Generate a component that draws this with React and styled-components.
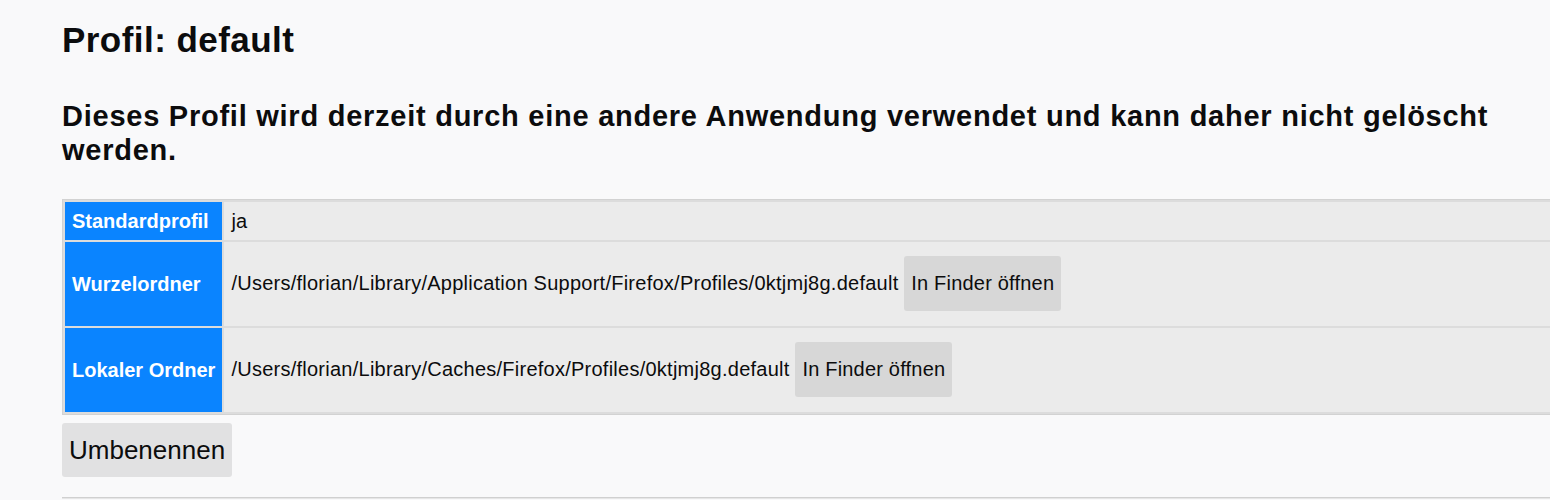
import React from 'react';
import styled, { createGlobalStyle } from 'styled-components';

const GlobalStyle = createGlobalStyle`
  html, body {
    margin: 0;
    padding: 0;
    background: #f9f9fa;
    overflow: hidden;
  }
  body {
    font-family: "Liberation Sans", Arial, Helvetica, sans-serif;
    color: #0c0c0d;
  }
`;

const Page = styled.div`
  width: 1540px;
  padding-left: 62px;
`;

const Title = styled.h1`
  margin: 19px 0 0;
  font-size: 35px;
  line-height: 42px;
  font-weight: bold;
  letter-spacing: 0.45px;
`;

const Notice = styled.h2`
  margin: 38px 0 0;
  width: 1450px;
  font-size: 29px;
  line-height: 34px;
  font-weight: bold;
  letter-spacing: 0.75px;
`;

const InfoTable = styled.table`
  margin-top: 32px;
  width: 1540px;
  border-collapse: separate;
  border-spacing: 2px;
  border: 1px solid #d2d2d2;
  background: #dcdcdc;
  font-size: 20px;
  line-height: 24px;
  letter-spacing: 0.25px;
`;

const HeadCell = styled.th`
  width: 143px;
  padding: 7px;
  background: #0a84ff;
  color: #fff;
  text-align: left;
  font-weight: bold;
  letter-spacing: 0;
  white-space: nowrap;
`;

const ValueCell = styled.td`
  padding: 7px;
  background: #ebebeb;
  white-space: nowrap;
`;

const FinderButton = styled.button`
  margin: 7px 0 8px;
  padding: 15px 7px 16px;
  border: none;
  border-radius: 3px;
  background: #d7d7d7;
  color: #0c0c0d;
  font-family: inherit;
  font-size: 20px;
  line-height: 24px;
  letter-spacing: 0.2px;
`;

const RenameButton = styled.button`
  display: block;
  margin-top: 8px;
  padding: 13px 7px;
  border: none;
  border-radius: 3px;
  background: #e1e1e2;
  color: #0c0c0d;
  font-family: inherit;
  font-size: 26px;
  line-height: 28px;
`;

const Divider = styled.hr`
  margin: 20px 0 0;
  border: none;
  border-top: 1px solid #d0d0d0;
  border-bottom: 1px solid #e6e6e6;
`;

const rows = [
  { label: 'Standardprofil', value: 'ja' },
  { label: 'Wurzelordner', value: '/Users/florian/Library/Application Support/Firefox/Profiles/0ktjmj8g.default', folder: true },
  { label: 'Lokaler Ordner', value: '/Users/florian/Library/Caches/Firefox/Profiles/0ktjmj8g.default', folder: true },
];

const App = () => (
  <Page>
    <GlobalStyle />
    <Title>Profil: default</Title>
    <Notice>Dieses Profil wird derzeit durch eine andere Anwendung verwendet und kann daher nicht gelöscht werden.</Notice>
    <InfoTable>
      <tbody>
        {rows.map(row => (
          <tr key={row.label}>
            <HeadCell>{row.label}</HeadCell>
            <ValueCell>
              {row.value}
              {row.folder && <> <FinderButton>In Finder öffnen</FinderButton></>}
            </ValueCell>
          </tr>
        ))}
      </tbody>
    </InfoTable>
    <RenameButton>Umbenennen</RenameButton>
    <Divider />
  </Page>
);

export default App;
